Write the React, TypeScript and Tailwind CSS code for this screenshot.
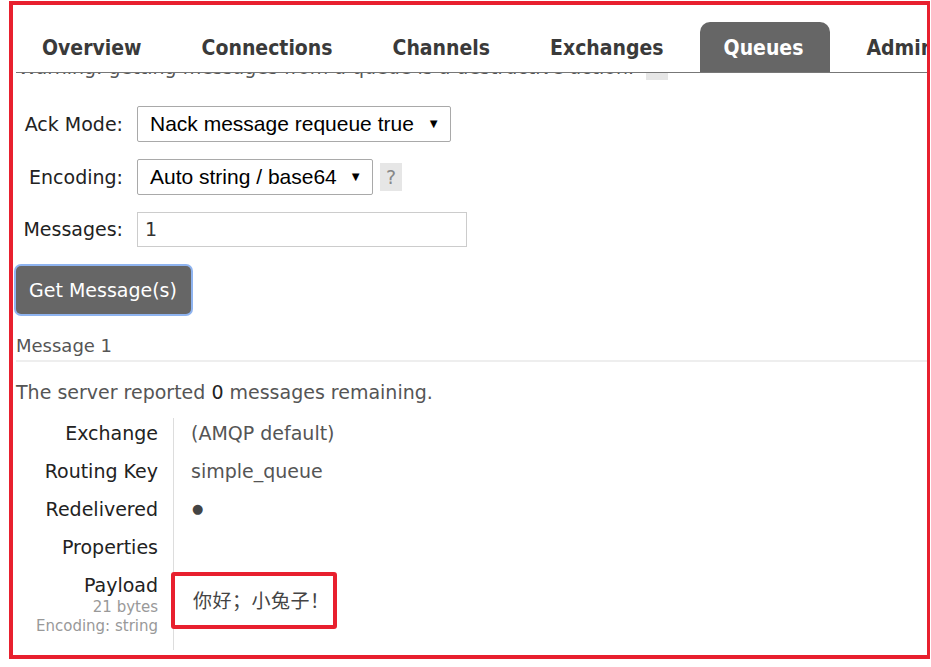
import React from 'react';

const tabs = ['Overview', 'Connections', 'Channels', 'Exchanges', 'Queues', 'Admin'];

type Row = { label: string; value?: React.ReactNode };

const rows: Row[] = [
  { label: 'Exchange', value: '(AMQP default)' },
  { label: 'Routing Key', value: 'simple_queue' },
  { label: 'Redelivered', value: <span className="pl-[1px] text-[13px] text-[#444]">●</span> },
  { label: 'Properties' },
];

function FakeSelect({ text, width }: { text: string; width: string }) {
  return (
    <div
      className={`${width} h-[36px] flex items-center justify-between pl-[12px] pr-[10px] border border-[#a9a9a9] rounded-[2px] bg-white font-['Liberation_Sans',sans-serif] text-[21px] text-black`}
    >
      <span>{text}</span>
      <span className="text-[13px]">▼</span>
    </div>
  );
}

export default function App() {
  return (
    <div className="w-[931px] h-[667px] bg-white overflow-hidden font-['DejaVu_Sans',sans-serif]">
      <div className="ml-[9px] mt-[1px] w-[921px] h-[658px] border-4 border-r-[3px] border-[#e8202e] overflow-hidden pl-[3px]">
        {/* nav tabs */}
        <div className="mt-[17px] flex gap-[12px] pl-[2px] border-b border-[#777] whitespace-nowrap">
          {tabs.map((t) => (
            <div
              key={t}
              className={`h-[50px] pt-[3px] flex items-center rounded-t-[10px] font-['DejaVu_Sans_Condensed','DejaVu_Sans',sans-serif] font-bold text-[21px] ${
                t === 'Queues' ? 'bg-[#666] text-white pl-[24px] pr-[27px]' : 'text-[#3a3a3a] px-[24px]'
              }`}
            >
              {t}
            </div>
          ))}
        </div>

        {/* warning, scrolled under the nav */}
        <div className="h-[7px] overflow-hidden flex items-end pl-[2px]">
          <div className="flex items-center gap-[12px] text-[19px] text-[#555] leading-[22px]">
            <span>Warning: getting messages from a queue is a destructive action.</span>
            <span className="w-[22px] h-[26px] bg-[#e6e6e6] text-[#888] text-center">?</span>
          </div>
        </div>

        {/* form */}
        <div className="mt-[26px] flex flex-col gap-[17px] text-[19px] text-[#222]">
          <div className="flex items-center gap-[14px]">
            <span className="w-[107px] text-right">Ack Mode:</span>
            <FakeSelect text="Nack message requeue true" width="w-[314px]" />
          </div>
          <div className="flex items-center gap-[14px]">
            <span className="w-[107px] text-right">Encoding:</span>
            <FakeSelect text="Auto string / base64" width="w-[236px]" />
            <span className="-ml-[7px] w-[22px] h-[28px] bg-[#e6e6e6] text-[#888] flex items-center justify-center">?</span>
          </div>
          <div className="flex items-center gap-[14px]">
            <span className="w-[107px] text-right">Messages:</span>
            <div className="w-[330px] h-[35px] border border-[#ccc] flex items-center pl-[7px] text-[19px] text-[#333]">1</div>
          </div>
        </div>

        <button className="mt-[19px] w-[175px] h-[48px] rounded-[5px] bg-[#666] text-white text-[19px] text-left pl-[13px] ring-2 ring-[#8fb4f0]">
          Get Message(s)
        </button>

        <div className="mt-[20px] text-[18px] leading-[24px] text-[#555] pb-[2px] border-b-2 border-[#eee]">Message 1</div>

        <p className="mt-[18px] text-[19px] leading-[24px] text-[#555]">
          The server reported <span className="text-[#222]">0</span> messages remaining.
        </p>

        {/* message table */}
        <div className="mt-[10px] flex text-[19px]">
          <div className="w-[142px] flex flex-col items-end text-[#222]">
            {rows.map((r) => (
              <div key={r.label} className="h-[38px] flex items-center">{r.label}</div>
            ))}
            <div className="h-[38px] flex items-center">Payload</div>
            <div className="-mt-[6px] text-[15px] leading-[19px] text-[#999] text-right">
              <div>21 bytes</div>
              <div>Encoding: string</div>
            </div>
          </div>
          <div className="ml-[15px] mt-[4px] w-px h-[232px] bg-[#ddd]" />
          <div className="flex flex-col text-[#555]">
            {rows.map((r) => (
              <div key={r.label} className="h-[38px] flex items-center pl-[17px]">{r.value}</div>
            ))}
            <div className="mt-[6px] -ml-[3px] w-[166px] h-[57px] border-4 border-[#e8202e] rounded-[3px] flex items-center pl-[18px] font-['Noto_Sans_CJK_SC',sans-serif] text-[19px] tracking-[0.5px] text-[#444]">
              你好；小兔子！
            </div>
          </div>
        </div>
      </div>
    </div>
  );
}
